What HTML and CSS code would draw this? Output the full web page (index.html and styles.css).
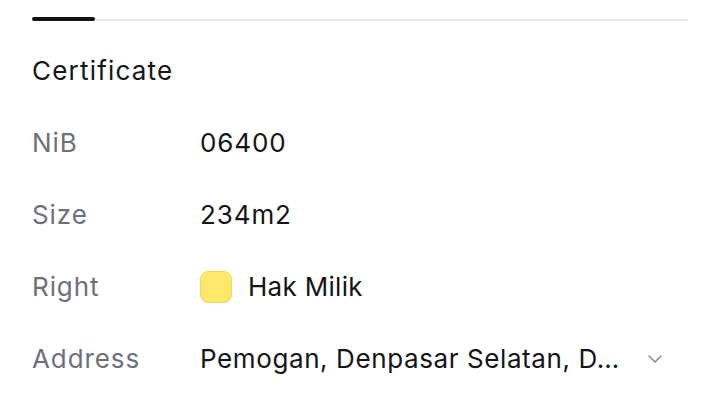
FILE: index.html
```html
<!DOCTYPE html>
<html>
<head>
<meta charset="utf-8">
<link rel="stylesheet" href="styles.css">
</head>
<body>
<div class="page">
  <div class="tabbar">
    <div class="tab-active"></div>
    <div class="tab-rest"></div>
  </div>
  <div class="list">
    <div class="row title">Certificate</div>
    <div class="row">
      <div class="label">NiB</div>
      <div class="value">06400</div>
    </div>
    <div class="row">
      <div class="label">Size</div>
      <div class="value">234m2</div>
    </div>
    <div class="row">
      <div class="label">Right</div>
      <div class="value right"><span class="swatch"></span><span>Hak Milik</span></div>
    </div>
    <div class="row">
      <div class="label">Address</div>
      <div class="value addr"><span class="addr-text">Pemogan, Denpasar Selatan, D…</span>
        <svg class="chev" width="14" height="8" viewBox="0 0 14 8"><path d="M1 1 L7 7 L13 1" fill="none" stroke="#8a8d91" stroke-width="1.6" stroke-linecap="round" stroke-linejoin="round"/></svg>
      </div>
    </div>
  </div>
</div>
</body>
</html>
```
FILE: styles.css
```css
html, body {
  margin: 0;
  padding: 0;
  background: #ffffff;
}
.page {
  width: 720px;
  height: 420px;
  box-sizing: border-box;
  padding: 16px 32px 0 32px;
  font-family: Inter, "Noto Sans", sans-serif;
  overflow: hidden;
}
.tabbar {
  display: flex;
  align-items: flex-end;
  height: 5px;
}
.tab-active {
  width: 63px;
  height: 4px;
  background: #121416;
  border-radius: 2px;
}
.tab-rest {
  flex: 1;
  height: 2px;
  background: #e7e7e9;
}
.list {
  margin-top: 14px;
  display: flex;
  flex-direction: column;
}
.row {
  height: 72px;
  display: flex;
  align-items: center;
  font-size: 26px;
  line-height: 32px;
  letter-spacing: 0.9px;
}
.title {
  color: #141618;
  font-weight: 400;
  letter-spacing: 1.2px;
}
.label {
  width: 168px;
  color: #6d7177;
  flex: none;
}
.value {
  color: #131518;
  flex: 1;
  min-width: 0;
}
.right {
  display: flex;
  align-items: center;
  gap: 16px;
  letter-spacing: 0.3px;
}
.swatch {
  width: 30px;
  height: 30px;
  border-radius: 8px;
  background: #fee96c;
  border: 1px solid #f2da58;
  flex: none;
}
.addr {
  display: flex;
  align-items: center;
  letter-spacing: 0.6px;
}
.addr-text {
  white-space: nowrap;
}
.chev {
  margin-left: auto;
  margin-right: 26px;
  flex: none;
}
```
